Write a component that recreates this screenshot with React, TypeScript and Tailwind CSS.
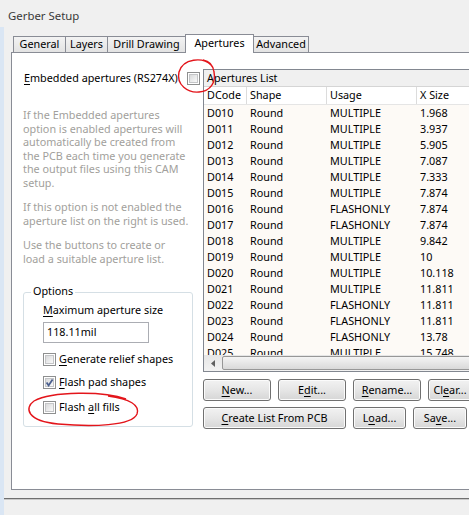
import { type ReactNode } from "react";

// ─── Data ───────────────────────────────────────────────────────────────────

const rows: [string, string, string, string][] = [
  ["D010", "Round", "MULTIPLE", "1.968"],
  ["D011", "Round", "MULTIPLE", "3.937"],
  ["D012", "Round", "MULTIPLE", "5.905"],
  ["D013", "Round", "MULTIPLE", "7.087"],
  ["D014", "Round", "MULTIPLE", "7.333"],
  ["D015", "Round", "MULTIPLE", "7.874"],
  ["D016", "Round", "FLASHONLY", "7.874"],
  ["D017", "Round", "FLASHONLY", "7.874"],
  ["D018", "Round", "MULTIPLE", "9.842"],
  ["D019", "Round", "MULTIPLE", "10"],
  ["D020", "Round", "MULTIPLE", "10.118"],
  ["D021", "Round", "MULTIPLE", "11.811"],
  ["D022", "Round", "FLASHONLY", "11.811"],
  ["D023", "Round", "FLASHONLY", "11.811"],
  ["D024", "Round", "FLASHONLY", "13.78"],
  ["D025", "Round", "MULTIPLE", "15.748"],
];

const help = [
  ["If the Embedded apertures", "option is enabled apertures will", "automatically be created from", "the PCB each time you generate", "the output files using this CAM", "setup."],
  ["If this option is not enabled the", "aperture list on the right is used."],
  ["Use the buttons to create or", "load a suitable aperture list."],
];

// ─── Small parts ────────────────────────────────────────────────────────────

function U({ children }: { children: ReactNode }) {
  return <span className="underline underline-offset-[2px]">{children}</span>;
}

function Check({ checked }: { checked?: boolean }) {
  return (
    <span className="relative flex h-[13px] w-[13px] shrink-0 border border-[#8e8f8f] bg-white p-px">
      <span className="h-full w-full border border-[#c4c5c7] bg-gradient-to-br from-[#d9dadb] to-[#f9f9f9]" />
      {checked && (
        <svg className="absolute left-0 top-0" width="11" height="11" viewBox="0 0 11 11">
          <path d="M2.6 5.4 L4.6 8.4 L8.6 2.4" fill="none" stroke="#4b5f8e" strokeWidth="1.8" />
        </svg>
      )}
    </span>
  );
}

function Tab({ label, active, w }: { label: string; active?: boolean; w: string }) {
  return (
    <div
      className={`-ml-px flex items-center justify-center border border-b-0 border-[#898c95] first:ml-0 ${w} ${
        active
          ? "relative z-10 -mb-px h-[19px] bg-white pb-[2px]"
          : "h-[16px] bg-gradient-to-b from-[#f3f3f3] to-[#e3e3e3]"
      }`}
    >
      {label}
    </div>
  );
}

function Button({ children, w }: { children: ReactNode; w: string }) {
  return (
    <div
      className={`flex h-[22px] shrink-0 items-center justify-center rounded-[3px] border border-[#707070] bg-gradient-to-b from-[#f2f2f2] via-[#e6e6e6] to-[#d6d6d6] shadow-[inset_0_0_0_1px_#fbfbfb] ${w}`}
    >
      {children}
    </div>
  );
}

// ─── App ────────────────────────────────────────────────────────────────────

export default function App() {
  return (
    <div className="relative h-[515px] w-[469px] overflow-hidden bg-[#f0f0f0] font-['Segoe_UI','Noto_Sans',sans-serif] text-[10.8px] leading-none text-black">
      {/* Title */}
      <div className="flex h-[27px] items-center pl-[8px] pt-[5px] text-[11.4px] text-[#3a3a3a]">Gerber Setup</div>

      <div className="flex h-[488px]">
        <div className="w-[4px] bg-[#dae6f4]" />
        <div className="flex min-w-0 flex-1 flex-col">
          <div className="pl-[7px]">
            {/* Tabs */}
            <div className="ml-[2px] mt-[7px] flex items-end">
              <Tab label="General" w="w-[53px]" />
              <Tab label="Layers" w="w-[43px]" />
              <Tab label="Drill Drawing" w="w-[79px]" />
              <Tab label="Apertures" w="w-[69px]" active />
              <Tab label="Advanced" w="w-[56px]" />
            </div>

            {/* Panel */}
            <div className="flex h-[438px] w-[480px] border border-[#898c95] bg-white">
              {/* Left column */}
              <div className="flex w-[191px] shrink-0 flex-col pl-[12px]">
                <div className="mt-[17px] flex h-[16px] items-center">
                  <span className="whitespace-nowrap">
                    <U>E</U>mbedded apertures (RS274X)
                  </span>
                  <span className="ml-auto mr-[3px]">
                    <Check />
                  </span>
                </div>

                <div className="-ml-px mt-[22px] flex flex-col gap-[11px] leading-[13.5px] text-[#a29f9c]">
                  {help.map((p, i) => (
                    <p key={i}>
                      {p.map((l) => (
                        <span key={l} className="block whitespace-nowrap">
                          {l}
                        </span>
                      ))}
                    </p>
                  ))}
                </div>

                {/* Options group */}
                <div className="-ml-px mt-[27px] flex h-[135px] w-[170px] flex-col rounded-[3px] border border-[#d5dfe5] pl-[19px]">
                  <span className="-mt-[7px] ml-[-12px] self-start bg-white px-[2px]">Options</span>
                  <span className="mt-[8px]">
                    <U>M</U>aximum aperture size
                  </span>
                  <div className="mt-[6px] flex h-[21px] w-[106px] items-center border border-[#abadb3] pl-[3px]">
                    118.11mil
                  </div>
                  <div className="mt-[10px] flex items-center gap-[3px]">
                    <Check />
                    <span>
                      <U>G</U>enerate relief shapes
                    </span>
                  </div>
                  <div className="mt-[10px] flex items-center gap-[3px]">
                    <Check checked />
                    <span>
                      <U>F</U>lash pad shapes
                    </span>
                  </div>
                  <div className="mt-[12px] flex items-center gap-[3px]">
                    <Check />
                    <span>
                      Flash <U>a</U>ll fills
                    </span>
                  </div>
                </div>
              </div>

              {/* Right column */}
              <div className="flex flex-1 flex-col pt-[16px]">
                <div className="flex h-[303px] w-[300px] flex-col border border-[#828790]">
                  <div className="flex h-[17px] shrink-0 items-center border-b border-[#d5d5d5] bg-[#f0f0f0] pl-[3px] pt-px">
                    Apertures List
                  </div>
                  <div className="flex h-[18px] shrink-0 border-b border-[#e5e5e5] bg-white">
                    <div className="flex w-[43px] items-center border-r border-[#dcdcdc] pl-[3px]">DCode</div>
                    <div className="flex w-[80px] items-center border-r border-[#dcdcdc] pl-[3px]">Shape</div>
                    <div className="flex w-[90px] items-center border-r border-[#dcdcdc] pl-[3px]">Usage</div>
                    <div className="flex flex-1 items-center pl-[3px]">X Size</div>
                  </div>
                  <div className="h-[250px] overflow-hidden bg-[#fdfaf6]">
                    {rows.map((r) => (
                      <div key={r[0]} className="flex h-[16px] items-center">
                        <div className="w-[43px] pl-[3px]">{r[0]}</div>
                        <div className="w-[80px] pl-[3px]">{r[1]}</div>
                        <div className="w-[90px] pl-[3px]">{r[2]}</div>
                        <div className="flex-1 pl-[3px]">{r[3]}</div>
                      </div>
                    ))}
                  </div>
                  {/* Horizontal scrollbar */}
                  <div className="flex h-[16px] shrink-0 items-center bg-gradient-to-b from-[#e6e6e6] to-[#f2f2f2]">
                    <div className="flex h-full w-[17px] items-center justify-center">
                      <svg width="4" height="7" viewBox="0 0 4 7">
                        <path d="M4 0 L0 3.5 L4 7 Z" fill="#606060" />
                      </svg>
                    </div>
                    <div className="ml-[1px] h-[14px] flex-1 rounded-[2px] border border-[#979797] bg-gradient-to-b from-[#f4f4f4] to-[#d9d9d9]" />
                  </div>
                </div>

                {/* Buttons */}
                <div className="mt-[7px] flex gap-[7px]">
                  <Button w="w-[68px]">
                    <span><U>N</U>ew...</span>
                  </Button>
                  <Button w="w-[68px]">
                    <span>E<U>d</U>it...</span>
                  </Button>
                  <Button w="w-[68px]">
                    <span><U>R</U>ename...</span>
                  </Button>
                  <Button w="w-[44px]">
                    <span>Cl<U>e</U>ar...</span>
                  </Button>
                </div>
                <div className="mt-[6px] flex gap-[7px]">
                  <Button w="w-[143px]">
                    <span><U>C</U>reate List From PCB</span>
                  </Button>
                  <Button w="w-[53px]">
                    <span>L<U>o</U>ad...</span>
                  </Button>
                  <Button w="w-[54px]">
                    <span>Sa<U>v</U>e...</span>
                  </Button>
                </div>
              </div>
            </div>
          </div>

          {/* Separator */}
          <div className="mt-[8px] h-[1px] bg-[#6f6f6f]" />
          <div className="h-[1px] bg-[#c9c9c9]" />
        </div>
      </div>

      {/* Hand-drawn red marks */}
      <svg className="pointer-events-none absolute left-0 top-0" width="469" height="515" viewBox="0 0 469 515">
        <path
          d="M211 65 C203 57 183 58 179 72 C176 85 188 93 199 92 C211 91 216 82 214 72 C213 65 209 61 203 60"
          fill="none"
          stroke="#e3151b"
          strokeWidth="1.4"
        />
        <path
          d="M126 399 C104 391 52 391 34 401 C24 408 27 421 58 424 C92 427 132 426 137 414 C140 405 130 399 108 396"
          fill="none"
          stroke="#e3151b"
          strokeWidth="1.4"
        />
      </svg>
    </div>
  );
}
